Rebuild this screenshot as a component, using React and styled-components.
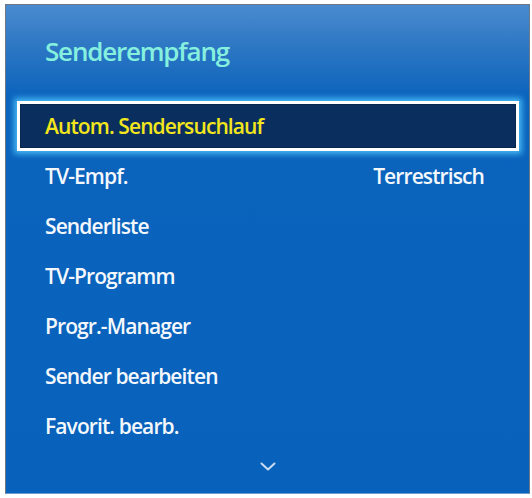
import React from 'react';
import styled, { createGlobalStyle } from 'styled-components';

const GlobalStyle = createGlobalStyle`
  html, body {
    margin: 0;
    padding: 0;
    background: #ffffff;
  }
  body {
    font-family: "Open Sans", "Noto Sans", sans-serif;
  }
`;

const Page = styled.div`
  width: 532px;
  height: 498px;
  padding: 4px 2px 4px 5px;
  box-sizing: border-box;
`;

const Panel = styled.div`
  height: 100%;
  box-sizing: border-box;
  border: 1px solid #6d7785;
  border-bottom-color: #6e9bd2;
  background: linear-gradient(180deg, #4a8bcf 0%, #2f78c4 8%, #0b63bc 19%, #0862bb 100%);
  display: flex;
  flex-direction: column;
`;

const Title = styled.h1`
  margin: 0;
  height: 96px;
  padding: 28px 0 0 39px;
  box-sizing: border-box;
  font-size: 26px;
  font-weight: 600;
  font-stretch: 92%;
  letter-spacing: -1.2px;
  color: #86f0df;
`;

const List = styled.ul`
  list-style: none;
  margin: 0;
  padding: 0 10px 0 11px;
  display: flex;
  flex-direction: column;
`;

const Item = styled.li`
  height: 50px;
  box-sizing: border-box;
  display: flex;
  align-items: center;
  justify-content: space-between;
  padding: 0 32px 0 25px;
  font-size: 21px;
  font-weight: 600;
  font-stretch: 92%;
  letter-spacing: -0.9px;
  color: ${(p) => (p.$active ? '#f3e61c' : '#f4f8fc')};
  background: ${(p) => (p.$active ? '#0a2f5f' : 'transparent')};
  border: ${(p) => (p.$active ? '3px solid #ffffff' : '3px solid transparent')};
  box-shadow: ${(p) =>
    p.$active ? '0 0 6px 3px rgba(80, 200, 255, 0.85), inset 0 0 2px rgba(0,0,0,0.6)' : 'none'};
`;

const Value = styled.span`
  color: #f4f8fc;
`;

const Footer = styled.div`
  flex: 1;
  display: flex;
  align-items: center;
  justify-content: center;
  padding-bottom: 12px;
`;

const Chevron = () => (
  <svg width="16" height="9" viewBox="0 0 16 9">
    <path d="M1.5 1.5 L8 7.5 L14.5 1.5" fill="none" stroke="#c9dcf2" strokeWidth="2" strokeLinecap="round" strokeLinejoin="round" />
  </svg>
);

const items = [
  { label: 'Autom. Sendersuchlauf', active: true },
  { label: 'TV-Empf.', value: 'Terrestrisch' },
  { label: 'Senderliste' },
  { label: 'TV-Programm' },
  { label: 'Progr.-Manager' },
  { label: 'Sender bearbeiten' },
  { label: 'Favorit. bearb.' },
];

const App = () => (
  <>
    <GlobalStyle />
    <Page>
      <Panel>
        <Title>Senderempfang</Title>
        <List>
          {items.map((item) => (
            <Item key={item.label} $active={item.active}>
              <span>{item.label}</span>
              {item.value && <Value>{item.value}</Value>}
            </Item>
          ))}
        </List>
        <Footer>
          <Chevron />
        </Footer>
      </Panel>
    </Page>
  </>
);

export default App;
